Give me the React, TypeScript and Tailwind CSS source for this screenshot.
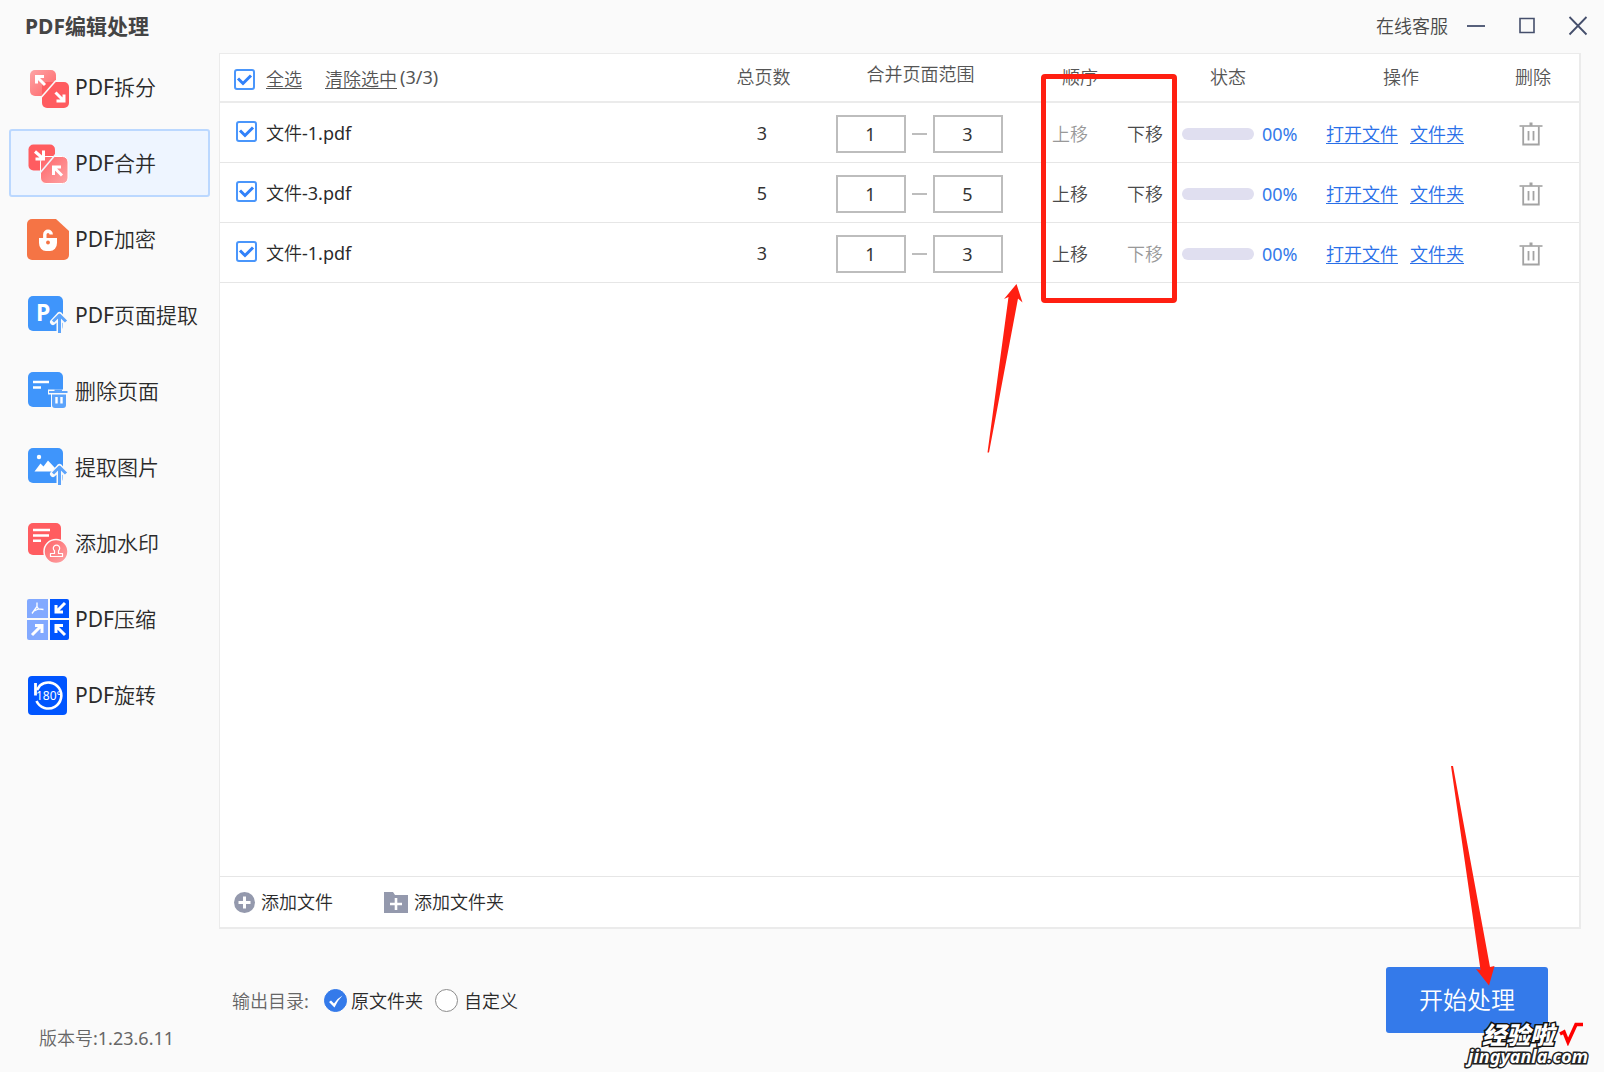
import type { ReactNode } from "react";

const RED = "#ff5c60";
const BLUE = "#3f95fb";

function Icon({ children }: { children: ReactNode }) {
  return (
    <svg className="h-[42px] w-[42px] shrink-0" viewBox="0 0 42 42" fill="none" aria-hidden="true">
      {children}
    </svg>
  );
}

function SplitIcon() {
  return (
    <Icon>
      <defs>
        <linearGradient id="split-fade" x1="0" y1="0" x2="1" y2="1">
          <stop offset="0" stopColor="#fda5a6" />
          <stop offset="1" stopColor="#ff6266" />
        </linearGradient>
      </defs>
      <rect x="3" y="4" width="26" height="26" rx="5" fill="url(#split-fade)" />
      <rect x="15" y="16" width="27" height="26" rx="5" fill={RED} />
      <path d="M29 14.5L14.5 31" stroke="#fafafa" strokeWidth="1.6" />
      <path d="M9.500 17.500V10.500H17M10 11L18 19" stroke="#fff" strokeWidth="3" />
      <path d="M37 28.500V35H29.500M36.500 34.500L28.500 26.500" stroke="#fff" strokeWidth="3" />
    </Icon>
  );
}

function MergeIcon() {
  return (
    <Icon>
      <defs>
        <linearGradient id="merge-fade" x1="0" y1="0" x2="1" y2="1">
          <stop offset="0" stopColor="#ff6266" />
          <stop offset="1" stopColor="#fda5a6" />
        </linearGradient>
      </defs>
      <rect x="1.500" y="2.500" width="26.500" height="26" rx="5" fill={RED} />
      <rect x="13.500" y="14.500" width="27.500" height="27" rx="5.500" fill="url(#merge-fade)" stroke="#fff" />
      <path d="M29 12L13 31" stroke="#eff6ff" strokeWidth="1.600" />
      <path d="M16.500 8.500V17H8.500M16 16.500L8 9.500" stroke="#fff" strokeWidth="3" />
      <path d="M26.500 33V25H34M27 25.500L35 33.500" stroke="#fff" strokeWidth="3" />
    </Icon>
  );
}

function LockIcon() {
  return (
    <Icon>
      <path d="M5 1H29L42 13V37a5 5 0 0 1-5 5H5a5 5 0 0 1-5-5V6a5 5 0 0 1 5-5z" fill="#f57445" />
      <path d="M12 20H30V25a7 8 0 0 1-7 8H19a7 8 0 0 1-7-8z" fill="#fff" />
      <path d="M17.800 21V16.500a3.200 3.200 0 0 1 6.400 0" stroke="#fff" strokeWidth="3.400" />
      <circle cx="21" cy="24.500" r="1.900" fill="#f57445" />
    </Icon>
  );
}

function UpArrow() {
  return (
    <>
      <path d="M26 28L32.500 21L39 28M32.500 21V39" stroke="#fafafa" strokeWidth="6" strokeLinecap="round" strokeLinejoin="round" />
      <path d="M26 27.500L32.500 21L39 27.500M32.500 21V39" stroke="#5ba3fb" strokeWidth="3" strokeLinejoin="round" />
    </>
  );
}

function ExtractPageIcon() {
  return (
    <Icon>
      <rect x="1" y="2" width="35" height="35" rx="5" fill={BLUE} />
      <text x="9" y="27" fill="#fff" className="font-['Noto_Sans',sans-serif] text-[23px] font-bold">P</text>
      <UpArrow />
    </Icon>
  );
}

function DeletePageIcon() {
  return (
    <Icon>
      <rect x="1" y="2" width="35" height="35" rx="5" fill={BLUE} />
      <path d="M6 12H22M6 17.500H14" stroke="#fff" strokeWidth="2.600" />
      <path d="M21 19.500H41V24.500H40V39H24V24.500H21z" fill="#fafafa" />
      <path d="M22 22H40.500M27.500 20.500H35" stroke="#5ba3fb" strokeWidth="1.800" />
      <path d="M25 24.500H39V35a3 3 0 0 1-3 3H28a3 3 0 0 1-3-3z" fill="#5ba3fb" />
      <path d="M29.500 27V33.500M34.500 27V33.500" stroke="#fff" strokeWidth="2.400" />
    </Icon>
  );
}

function ExtractImageIcon() {
  return (
    <Icon>
      <rect x="1" y="2" width="35" height="35" rx="5" fill={BLUE} />
      <circle cx="12" cy="11" r="2.200" fill="#fff" />
      <path d="M7.500 25.500L13.500 17.500L16.500 20.500L21 14.500L28 22V25.500z" fill="#fff" />
      <UpArrow />
    </Icon>
  );
}

function WatermarkIcon() {
  return (
    <Icon>
      <defs>
        <linearGradient id="stamp-fade" x1="0" y1="0" x2="1" y2="1">
          <stop offset="0" stopColor="#ff6266" />
          <stop offset="1" stopColor="#fda5a6" />
        </linearGradient>
      </defs>
      <rect x="1" y="1" width="33" height="32" rx="5" fill={RED} />
      <path d="M6 8H23M6 13.500H22M6 18.700H14" stroke="#fff" strokeWidth="2.400" />
      <circle cx="29" cy="29.500" r="12" fill="url(#stamp-fade)" stroke="#fafafa" strokeWidth="1.500" />
      <path d="M23.500 34.500V31.500H27.500V28.800a3.200 3.200 0 1 1 4 0V31.500H35.500V34.500z" stroke="#fff" strokeWidth="1.200" strokeLinejoin="round" />
    </Icon>
  );
}

function CompressIcon() {
  return (
    <Icon>
      <path d="M2 1H21V20H0V3a2 2 0 0 1 2-2z" fill="#82a9ff" />
      <path d="M23 1H40a2 2 0 0 1 2 2V20H23z" fill="#0055ff" />
      <path d="M0 22H21V42H2a2 2 0 0 1-2-2z" fill="#82a9ff" />
      <path d="M23 22H42V40a2 2 0 0 1-2 2H23z" fill="#0055ff" />
      <path d="M10 4.500V8.500L5 15.500M10 8.500L11.500 11L16.500 11.500M7 13L11.500 11" stroke="#fff" strokeWidth="1.300" />
      <path d="M38 5L29.500 13.500M29 7V14H36" stroke="#fff" strokeWidth="3" />
      <path d="M5 37L13.500 28.500M8 27.500H15V35" stroke="#fff" strokeWidth="3" />
      <path d="M38 37L29.500 28.500M29 35V27.500H36" stroke="#fff" strokeWidth="3" />
    </Icon>
  );
}

function RotateIcon() {
  return (
    <Icon>
      <rect x="1" y="2" width="39" height="39" rx="4" fill="#0055ff" />
      <path d="M10 16L13 11.500A13 13 0 1 1 9.500 27" stroke="#fff" strokeWidth="2.600" />
      <path d="M8.500 9V21.500" stroke="#fff" strokeWidth="2.800" />
      <text x="9" y="26" fill="#fff" className="font-['Noto_Sans',sans-serif] text-[12px]">180°</text>
    </Icon>
  );
}

const tools: { label: string; icon: ReactNode; active?: boolean }[] = [
  { label: "PDF拆分", icon: <SplitIcon /> },
  { label: "PDF合并", icon: <MergeIcon />, active: true },
  { label: "PDF加密", icon: <LockIcon /> },
  { label: "PDF页面提取", icon: <ExtractPageIcon /> },
  { label: "删除页面", icon: <DeletePageIcon /> },
  { label: "提取图片", icon: <ExtractImageIcon /> },
  { label: "添加水印", icon: <WatermarkIcon /> },
  { label: "PDF压缩", icon: <CompressIcon /> },
  { label: "PDF旋转", icon: <RotateIcon /> },
];

const files = [
  { id: "a", name: "文件-1.pdf", pages: 3 },
  { id: "b", name: "文件-3.pdf", pages: 5 },
  { id: "c", name: "文件-1.pdf", pages: 3 },
];

function CheckBox({ id }: { id: string }) {
  return (
    <span className="grid h-[21px] w-[21px] shrink-0">
      <input
        id={id}
        type="checkbox"
        defaultChecked
        className="peer h-[21px] w-[21px] appearance-none rounded-[3px] border-2 border-[#4a96fb] bg-white [grid-area:1/1]"
      />
      <svg viewBox="0 0 21 21" className="pointer-events-none invisible h-[21px] w-[21px] [grid-area:1/1] peer-checked:visible" fill="none" aria-hidden="true">
        <path d="M4 9.500L9 14.500L17 6.500" stroke="#3181fa" strokeWidth="3" />
      </svg>
    </span>
  );
}

function RadioButton({ id, checked }: { id: string; checked?: boolean }) {
  return (
    <span className="grid h-[23px] w-[23px] shrink-0">
      <input
        id={id}
        type="radio"
        name="output"
        defaultChecked={checked}
        className="peer h-[23px] w-[23px] appearance-none rounded-full border border-[#8c8c8c] bg-white [grid-area:1/1] checked:border-[#347aea] checked:bg-[#347aea]"
      />
      <svg viewBox="0 0 23 23" className="pointer-events-none invisible h-[23px] w-[23px] [grid-area:1/1] peer-checked:visible" aria-hidden="true">
        <path d="M5 13L7 11.500L10 14.500Q13 9.500 18.500 6.500Q13.500 11.500 10.500 18.500z" fill="#fff" />
      </svg>
    </span>
  );
}

function TrashIcon() {
  return (
    <svg className="h-6 w-6" viewBox="0 0 24 24" fill="none" stroke="#a3a3a3" aria-hidden="true">
      <path d="M0.500 4H23.500" strokeWidth="1.600" />
      <path d="M12 0.500V4" strokeWidth="3" />
      <path d="M4.200 4.500V22.500H19.800V4.500" strokeWidth="1.800" />
      <path d="M9.500 9V18.500M14.500 9V18.500" strokeWidth="1.800" />
    </svg>
  );
}

function FileRow({ id, name, pages, first, last }: { id: string; name: string; pages: number; first: boolean; last: boolean }) {
  const inputClass = "h-[38px] w-[70px] border-2 border-[#bdbdbd] bg-white text-center text-[#333]";
  return (
    <tr className="h-[60px] border-b border-[#e6e6e6]">
      <td className="pl-4">
        <div className="flex items-center gap-[9px] pb-[2px]">
          <CheckBox id={id} />
          <label htmlFor={id} className="pt-[3px]">{name}</label>
        </div>
      </td>
      <td className="pt-[2px] text-center text-[#333]">{pages}</td>
      <td>
        <div className="flex items-center justify-center gap-[6px] pt-[3px]">
          <input className={inputClass} defaultValue="1" aria-label={`${name} 起始页`} />
          <span className="h-[2px] w-[15px] bg-[#bdbdbd]" />
          <input className={inputClass} defaultValue={pages} aria-label={`${name} 结束页`} />
        </div>
      </td>
      <td className="pt-1 pl-7">
        <div className="flex gap-[39px] text-[#4a4a4a]">
          <button type="button" disabled={first} className="disabled:text-[#999]">上移</button>
          <button type="button" disabled={last} className="disabled:text-[#999]">下移</button>
        </div>
      </td>
      <td className="pt-[3px] pl-[6px]">
        <div className="flex items-center gap-2 text-[#347aea]">
          <span className="h-3 w-[72px] rounded-full bg-[#e0dff0]" />
          00%
        </div>
      </td>
      <td className="pt-1 pl-4">
        <div className="flex gap-3 text-[#2a70e8] underline underline-offset-2">
          <a href="#open">打开文件</a>
          <a href="#folder">文件夹</a>
        </div>
      </td>
      <td className="pt-[3px] pl-[21px]">
        <button type="button" aria-label={`删除 ${name}`} className="block">
          <TrashIcon />
        </button>
      </td>
    </tr>
  );
}

function FileTable() {
  return (
    <table className="w-full table-fixed border-collapse text-left">
      <colgroup>
        <col />
        <col className="w-[104px]" />
        <col className="w-[210px]" />
        <col className="w-[152px]" />
        <col className="w-[134px]" />
        <col className="w-[188px]" />
        <col className="w-[81px]" />
      </colgroup>
      <thead>
        <tr className="h-12 border-b-2 border-[#ebebeb] text-[#555]">
          <th className="pl-[14px] font-normal">
            <div className="flex items-center pt-[3px]">
              <CheckBox id="all" />
              <label htmlFor="all" className="ml-[11px] underline underline-offset-2">全选</label>
              <button type="button" className="ml-[23px] underline underline-offset-2">清除选中</button>
              <span className="ml-[3px] pb-[5px]">(3/3)</span>
            </div>
          </th>
          <th className="pb-[2px] pl-[3px] text-center font-normal">总页数</th>
          <th className="pb-2 pl-[3px] text-center font-normal">合并页面范围</th>
          <th className="pb-[2px] pl-[38px] font-normal">顺序</th>
          <th className="pb-[2px] pl-[34px] font-normal">状态</th>
          <th className="pb-[2px] pl-[73px] font-normal">操作</th>
          <th className="pb-[2px] pl-[17px] font-normal">删除</th>
        </tr>
      </thead>
      <tbody>
        {files.map((file, i) => (
          <FileRow key={file.id} {...file} first={i === 0} last={i === files.length - 1} />
        ))}
      </tbody>
    </table>
  );
}

function TitleBar() {
  return (
    <header className="flex h-[53px] items-center justify-between pr-4 pb-[2px] pl-[25px]">
      <h1 className="font-['Noto_Sans','Noto_Sans_CJK_SC',sans-serif] text-[21px] font-bold text-[#444]">PDF编辑处理</h1>
      <div className="flex items-center text-[#4a4a4a]">
        <a href="#service">在线客服</a>
        <button type="button" aria-label="最小化" className="ml-[18px]">
          <svg className="h-5 w-5" viewBox="0 0 20 20" stroke="#454f6c" strokeWidth="1.800" fill="none"><path d="M1 10H19" /></svg>
        </button>
        <button type="button" aria-label="最大化" className="ml-[31px]">
          <svg className="h-5 w-5" viewBox="0 0 20 20" stroke="#454f6c" strokeWidth="1.600" fill="none"><path d="M3 2.500H17V16.500H3z" /></svg>
        </button>
        <button type="button" aria-label="关闭" className="ml-[31px]">
          <svg className="h-5 w-5" viewBox="0 0 20 20" stroke="#454f6c" strokeWidth="1.800" fill="none"><path d="M1.500 1L18.500 18.500M18.500 1L1.500 18.500" /></svg>
        </button>
      </div>
    </header>
  );
}

function Annotations() {
  return (
    <>
      <div className="pointer-events-none absolute top-[74px] right-[427px] h-[229px] w-[136px] rounded-[4px] border-5 border-[#ff1f11]" />
      <svg className="pointer-events-none absolute top-[283px] right-[581px] h-[170px] w-[37px]" viewBox="0 0 37 170" fill="#ff1f11" aria-hidden="true">
        <path d="M30.500 1L36.500 19.500L32 15.500L3 169.500H1.500L22.500 14L18 16z" />
      </svg>
      <svg className="pointer-events-none absolute right-[109px] bottom-[86px] h-[221px] w-[45px]" viewBox="0 0 45 221" fill="#ff1f11" aria-hidden="true">
        <path d="M39 220.500L26 204L30.500 205L1 1H3L40 202L44.500 201z" />
      </svg>
      <div className="pointer-events-none absolute right-4 bottom-[6px] flex flex-col items-end leading-none text-white">
        <div className="mr-[5px] flex items-center gap-[5px]">
          <span className="font-['Noto_Sans_CJK_SC',sans-serif] text-[24px] font-black italic [-webkit-text-stroke:3px_#111] [paint-order:stroke_fill]">经验啦</span>
          <svg className="h-6 w-6" viewBox="0 0 24 24" fill="none" aria-hidden="true">
            <path d="M1 12L5 10L9 20L17 2.500H24" stroke="#f00" strokeWidth="3.500" />
          </svg>
        </div>
        <span className="font-['Noto_Sans',sans-serif] text-[18px] leading-5 font-bold italic [-webkit-text-stroke:3px_#222] [paint-order:stroke_fill]">jingyanla.com</span>
      </div>
    </>
  );
}

export default function App() {
  return (
    <div className="relative flex min-h-screen flex-col bg-[#fafafa] font-['Noto_Sans','Noto_Sans_CJK_SC_DemiLight','Noto_Sans_CJK_SC',sans-serif] text-[18px] leading-6 text-[#2b2b2b]">
      <TitleBar />
      <div className="flex flex-1">
        <aside className="flex w-[219px] shrink-0 flex-col pl-[9px]">
          <nav className="flex w-[201px] flex-col gap-2">
            {tools.map((tool) => (
              <button
                key={tool.label}
                type="button"
                className={
                  tool.active
                    ? "flex h-[68px] items-center gap-[6px] rounded-[3px] border-2 border-[#bbd8ff] bg-[#eef5ff] pl-4 text-[21px] whitespace-nowrap"
                    : "flex h-[68px] items-center gap-[6px] rounded-[3px] border-2 border-transparent pl-4 text-[21px] whitespace-nowrap"
                }
              >
                {tool.icon}
                {tool.label}
              </button>
            ))}
          </nav>
          <p className="mt-auto pb-[22px] pl-[30px] text-[#666]">版本号:1.23.6.11</p>
        </aside>
        <main className="flex min-w-0 flex-1 flex-col pr-[23px]">
          <section className="flex flex-1 flex-col border-t border-r-2 border-b-2 border-l border-[#ebebeb] bg-white">
            <div className="flex-1">
              <FileTable />
            </div>
            <div className="flex h-[51px] items-center border-t border-[#e6e6e6] pl-[14px]">
              <button type="button" className="flex items-center gap-[6px]">
                <svg className="h-[21px] w-[21px]" viewBox="0 0 21 21" aria-hidden="true">
                  <circle cx="10.500" cy="10.500" r="10.500" fill="#9499ad" />
                  <path d="M10.500 4.500V16.500M4.500 10.500H16.500" stroke="#fff" strokeWidth="3" />
                </svg>
                添加文件
              </button>
              <button type="button" className="ml-[51px] flex items-center gap-[6px]">
                <svg className="h-[21px] w-6" viewBox="0 0 24 21" aria-hidden="true">
                  <path d="M0 0H9L11 3H24V21H0z" fill="#9499ad" />
                  <path d="M12 6V18M6 12H18" stroke="#fff" strokeWidth="2.600" />
                </svg>
                添加文件夹
              </button>
            </div>
          </section>
          <footer className="flex h-[143px] items-center justify-between pr-[33px] pl-[13px]">
            <div className="flex items-center">
              <span className="w-[92px] text-[#666]">输出目录:</span>
              <RadioButton id="same" checked />
              <label htmlFor="same" className="ml-1">原文件夹</label>
              <span className="w-3" />
              <RadioButton id="custom" />
              <label htmlFor="custom" className="ml-[6px]">自定义</label>
            </div>
            <button type="button" className="mb-[2px] h-[66px] w-[162px] rounded-[3px] bg-[#347aea] text-2xl leading-6 text-white">开始处理</button>
          </footer>
        </main>
      </div>
      <Annotations />
    </div>
  );
}
